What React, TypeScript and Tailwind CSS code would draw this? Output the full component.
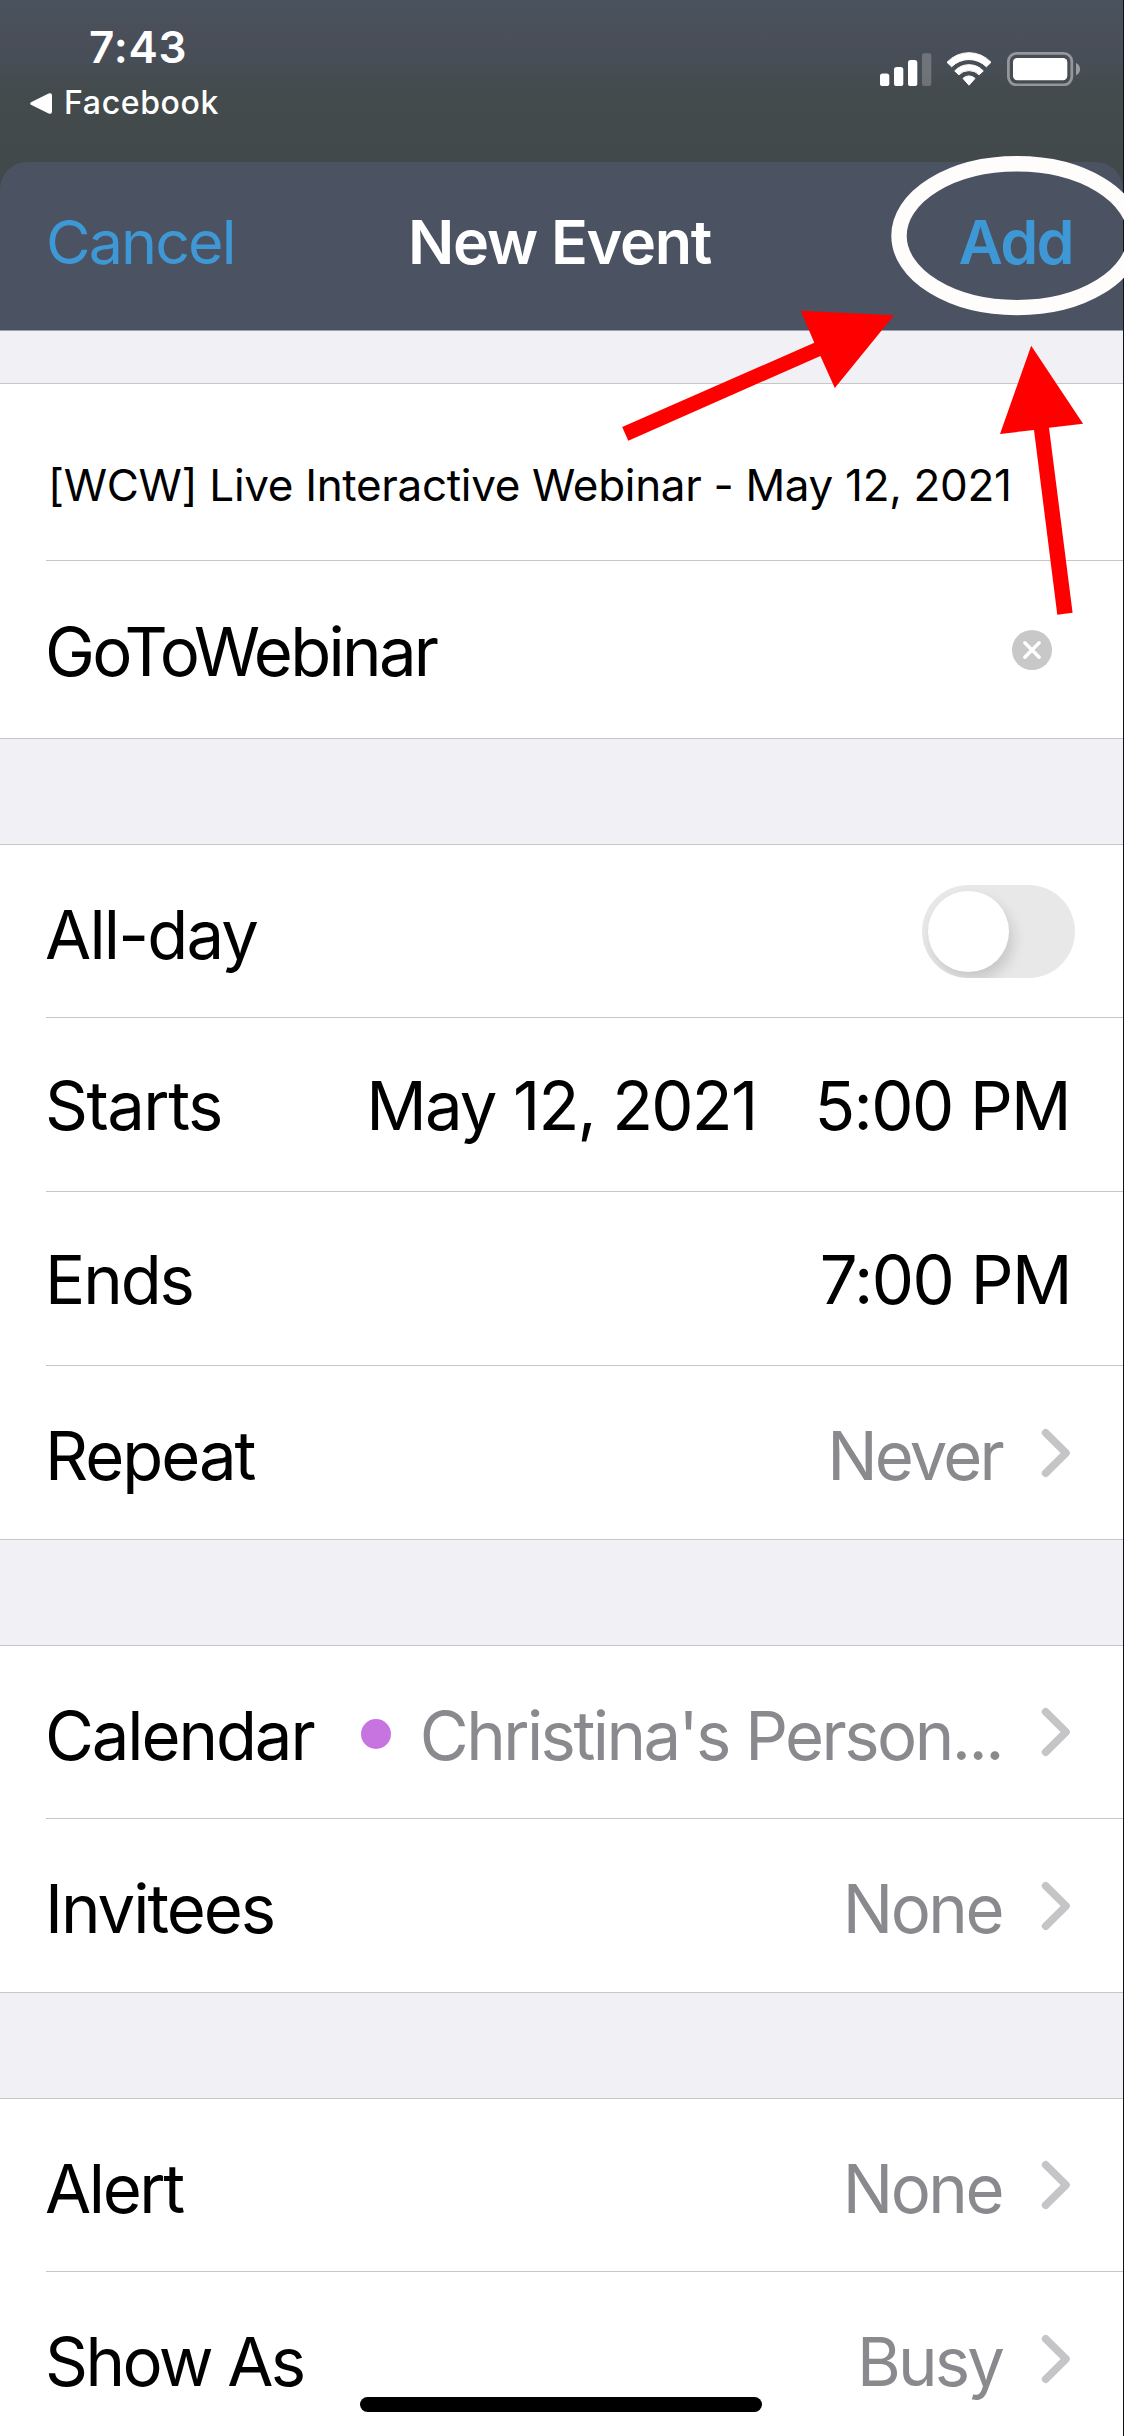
import React, { useState } from 'react'
import { clsx } from 'clsx'

const SignalIcon = () => (
  <svg width="52" height="34" viewBox="0 0 52 34" fill="white">
    <rect x="0" y="21.5" width="9.3" height="12.5" rx="2.6" />
    <rect x="14" y="15" width="9.3" height="19" rx="2.6" />
    <rect x="28" y="8" width="9.3" height="26" rx="2.6" />
    <rect x="42" y="1.2" width="9.3" height="32.8" rx="2.2" opacity="0.22" />
  </svg>
)

const WifiIcon = () => (
  <svg width="46" height="35" viewBox="0 0 46 35" fill="white" stroke="white" strokeWidth="1" strokeLinejoin="round">
    <path d="M1 10.3A30 30 0 0 1 45 10.3L40.4 14.8A24.5 24.5 0 0 0 5.6 14.8Z" />
    <path d="M8.7 18.9A19.5 19.5 0 0 1 37.3 18.9L33.2 22.8A14.5 14.5 0 0 0 12.8 22.8Z" />
    <path d="M17 26.4A8.5 8.5 0 0 1 29 26.4L23 33.2Z" />
  </svg>
)

const BatteryIcon = () => (
  <svg width="74" height="34" viewBox="0 0 74 34" fill="none">
    <rect x="1.4" y="1.4" width="63.4" height="31.4" rx="8" stroke="white" strokeOpacity="0.42" strokeWidth="2.8" />
    <rect x="6" y="6" width="54.3" height="22.3" rx="4.2" fill="white" />
    <path d="M69 11C74.4 12.8 74.4 21.4 69 23.2Z" fill="white" fillOpacity="0.45" />
  </svg>
)

const Chevron = () => (
  <svg className="ml-[39px] shrink-0" width="30" height="50" viewBox="0 0 30 50" fill="none">
    <path d="M4.6 4.8L25 25L4.6 45.2" stroke="#c5c5c7" strokeWidth="7.6" strokeLinecap="round" strokeLinejoin="round" />
  </svg>
)

const ClearButton = () => (
  <svg className="mr-[71px] shrink-0" width="40" height="40" viewBox="0 0 40 40">
    <circle cx="20" cy="20" r="20" fill="#c8c8c8" />
    <path d="M12.8 12.8L27.2 27.2M27.2 12.8L12.8 27.2" stroke="white" strokeWidth="3.4" strokeLinecap="round" />
  </svg>
)

interface RowProps {
  label: string
  labelClass?: string
  className?: string
  last?: boolean
  children?: React.ReactNode
}

const Row = ({ label, labelClass = '', className = 'h-[173px]', last = false, children }: RowProps) => (
  <div className={clsx('ml-[46px] flex items-center justify-between', className, !last && 'border-b border-[#c6c6c8]')}>
    <span className={labelClass}>{label}</span>
    {children}
  </div>
)

// value + chevron on the right of a row that opens another screen
const Detail = ({ value, valueClass, dot }: { value: string; valueClass: string; dot?: boolean }) => (
  <div className="flex items-center pr-[52px] text-[#8a8a8e]">
    {dot && <i className="mr-[29px] mt-[3px] h-[30px] w-[30px] rounded-full bg-[#c774e0]" />}
    <span className={clsx('pt-[6px]', valueClass)}>{value}</span>
    <Chevron />
  </div>
)

const Section = ({ children }: { children: React.ReactNode }) => (
  <section className="border-y border-[#c6c6c8] bg-white">{children}</section>
)

// hand-drawn style markup pointing at the Add button
const Annotations = () => (
  <svg className="pointer-events-none absolute left-0 top-0" width="1124" height="640" viewBox="0 0 1124 640">
    <ellipse cx="1017" cy="235.7" rx="118" ry="71.9" fill="none" stroke="#fffcfc" strokeWidth="15.4" />
    <path d="M894 315.3L800.7 310.7L814.3 342.7L622.2 427L628.3 440.7L820.4 356L834.8 388Z" fill="#ff0000" />
    <path d="M1031.2 345.7L1000 434L1034 430L1057.3 614.7L1072.6 612.7L1049 427.7L1083.1 423.7Z" fill="#ff0000" />
  </svg>
)

export default function App() {
  const [allDay, setAllDay] = useState(false)

  return (
    <div className="relative h-[2436px] w-[1124px] overflow-hidden font-['Inter','Liberation_Sans',sans-serif]">
      <div className="h-full border-r border-[#101116] bg-[#f0f0f5]">
        <div className="bg-[linear-gradient(#48535d_0px,#4a4f59_32px,#474e57_60px,#444b4d_92px,#42494b_162px)]">
          {/* status bar */}
          <div className="flex h-[162px] justify-between text-white">
            <div className="flex flex-col whitespace-nowrap leading-none">
              <span className="ml-[89px] mt-[25px] text-[44px] font-semibold tracking-[0.8px]">7:43</span>
              <div className="ml-[30px] mt-[18px] flex items-center">
                <svg width="22" height="21" viewBox="0 0 22 21" fill="white">
                  <path d="M1 9.2L18.6 0.5Q22 -0.6 22 2.4V18.6Q22 21.6 18.6 20.5L1 11.8Q-0.6 10.5 1 9.2Z" />
                </svg>
                <span className="ml-[12px] text-[32px] font-medium tracking-[0.65px]">Facebook</span>
              </div>
            </div>
            <div className="mr-[42px] mt-[51px] flex h-[36px] items-center">
              <SignalIcon />
              <span className="ml-[14px]"><WifiIcon /></span>
              <span className="ml-[15px]"><BatteryIcon /></span>
            </div>
          </div>

          {/* sheet header */}
          <header className="grid h-[169px] grid-cols-[1fr_auto_1fr] items-center rounded-t-[27px] border-b border-[#9da1ac] bg-[#4b5261] pb-[8px] pl-[46px] pr-[50px] text-[61px] leading-none">
            <button className="justify-self-start tracking-[-1.9px] text-[#3e98d5]">Cancel</button>
            <h1 className="font-semibold tracking-[-1.3px] text-white">New Event</h1>
            <button className="justify-self-end font-semibold tracking-[-1.7px] text-[#3e98d5]">Add</button>
          </header>
        </div>

        <main className="flex flex-col gap-[105px] whitespace-nowrap pt-[52px] text-[67px] leading-none text-black">
          <Section>
            <Row label="[WCW] Live Interactive Webinar - May 12, 2021" labelClass="ml-[2px] pt-[26px] text-[44px] tracking-[-0.325px]" className="h-[177px]" />
            <Row label="GoToWebinar" labelClass="-ml-px pt-[4px] tracking-[-2.7px]" className="h-[177px]" last>
              <ClearButton />
            </Row>
          </Section>

          <Section>
            <Row label="All-day" labelClass="-ml-px pt-[6px] tracking-[-1.8px]">
              <button
                onClick={() => setAllDay(!allDay)}
                className={clsx('mr-[48px] flex h-[93px] w-[153px] items-center overflow-hidden rounded-full p-[6px]', allDay ? 'justify-end bg-[#34c759]' : 'bg-[#e8e8e9]')}
              >
                <span className="h-[81px] w-[81px] rounded-full bg-white shadow-[4px_8px_14px_rgba(0,0,0,0.14)]" />
              </button>
            </Row>
            <Row label="Starts" labelClass="-ml-px pt-[2px] tracking-[-1.5px]" className="h-[174px]">
              <div className="flex pr-[53px] pt-[2px]">
                <span className="mr-[58px] tracking-[-1.74px]">May 12, 2021</span>
                <span className="tracking-[-1.6px]">5:00 PM</span>
              </div>
            </Row>
            <Row label="Ends" labelClass="-ml-px pt-[2px] tracking-[-2.1px]" className="h-[174px]">
              <span className="pr-[52px] pt-[2px] tracking-[-1.5px]">7:00 PM</span>
            </Row>
            <Row label="Repeat" labelClass="-ml-px pt-[6px] tracking-[-2px]" last>
              <Detail value="Never" valueClass="tracking-[-2.8px]" />
            </Row>
          </Section>

          <Section>
            <Row label="Calendar" labelClass="-ml-px pt-[6px] tracking-[-2.1px]">
              <Detail value="Christina's Person..." valueClass="tracking-[-2.55px]" dot />
            </Row>
            <Row label="Invitees" labelClass="-ml-px pt-[6px] tracking-[-2px]" last>
              <Detail value="None" valueClass="tracking-[-2.5px]" />
            </Row>
          </Section>

          <Section>
            <Row label="Alert" labelClass="-ml-px pt-[6px] tracking-[-2.4px]">
              <Detail value="None" valueClass="tracking-[-2.5px]" />
            </Row>
            <Row label="Show As" labelClass="-ml-px pt-[6px] tracking-[-2.6px]" last>
              <Detail value="Busy" valueClass="tracking-[-2.9px]" />
            </Row>
          </Section>
        </main>
      </div>

      {/* home indicator */}
      <div className="absolute bottom-[24px] left-[360px] h-[15px] w-[402px] rounded-full bg-black" />
      <Annotations />
    </div>
  )
}
